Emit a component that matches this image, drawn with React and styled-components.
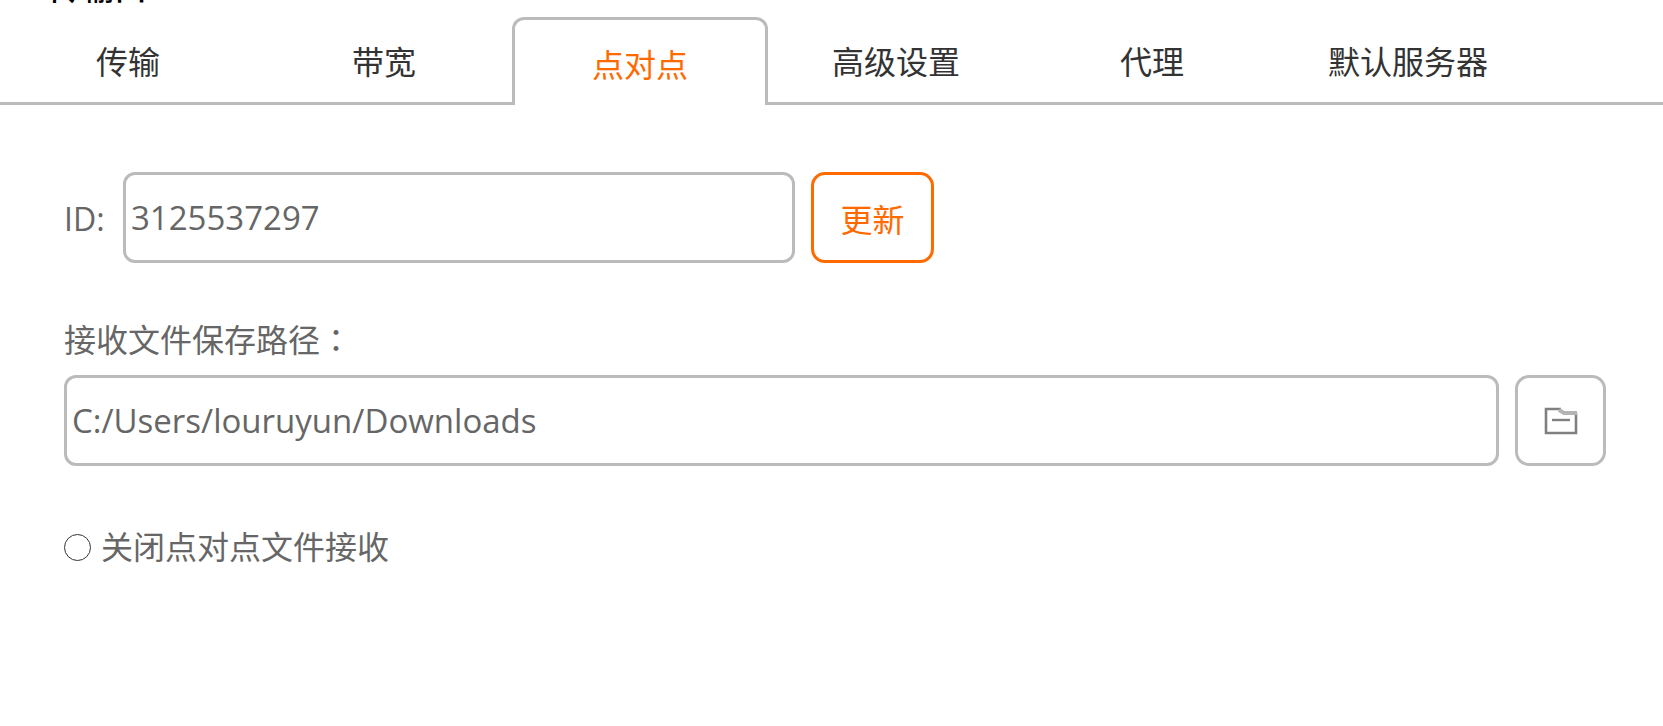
import React, { useState } from 'react';
import styled, { createGlobalStyle } from 'styled-components';

const tabs = ['传输', '带宽', '点对点', '高级设置', '代理', '默认服务器'];

function App() {
  const [activeTab, setActiveTab] = useState('点对点');
  const [id, setId] = useState('3125537297');
  const [path, setPath] = useState('C:/Users/louruyun/Downloads');

  return (
    <Page>
      <GlobalStyle />
      <Title>传输口</Title>
      <TabBar role="tablist">
        {tabs.map((tab) => (
          <Tab
            key={tab}
            role="tab"
            aria-selected={tab === activeTab}
            $active={tab === activeTab}
            onClick={() => setActiveTab(tab)}
          >
            {tab}
          </Tab>
        ))}
        <TabFiller />
      </TabBar>
      <Panel>
        <Row>
          <IdLabel htmlFor="peer-id">ID:</IdLabel>
          <IdInput id="peer-id" value={id} onChange={(e) => setId(e.target.value)} />
          <UpdateButton type="button">更新</UpdateButton>
        </Row>
        <PathField>
          <Label htmlFor="save-path">
            接收文件保存路径<Colon>：</Colon>
          </Label>
          <Row>
            <PathInput id="save-path" value={path} onChange={(e) => setPath(e.target.value)} />
            <BrowseButton type="button" aria-label="浏览">
              <FolderIcon />
            </BrowseButton>
          </Row>
        </PathField>
        <RadioRow>
          <Radio id="close-receive" type="radio" name="close-receive" />
          <Label htmlFor="close-receive">关闭点对点文件接收</Label>
        </RadioRow>
      </Panel>
    </Page>
  );
}

function FolderIcon() {
  return (
    <svg width="34" height="28" viewBox="0 0 34 28" fill="none">
      <path d="M17 2H2V26H32V6" stroke="#808080" strokeWidth="2.6" />
      <path d="M15 3L20 6H33" stroke="#b4b4b4" strokeWidth="4" />
      <path d="M8 13H26" stroke="#808080" strokeWidth="2.4" />
    </svg>
  );
}

const GlobalStyle = createGlobalStyle`
  * {
    box-sizing: border-box;
  }

  body {
    margin: 0;
    background: #fff;
    color: #666;
    font-family: 'Open Sans', 'Noto Sans CJK SC', sans-serif;
    font-size: 32px;
  }

  button,
  input {
    font: inherit;
    color: inherit;
  }
`;

const Page = styled.div`
  overflow: hidden;
`;

// Only the lower edge of the heading shows above the tabs
const Title = styled.div`
  display: flex;
  align-items: flex-end;
  height: 3px;
  margin-bottom: 14px;
  padding-left: 48px;
  overflow: hidden;
  color: #000;
  font-size: 33px;
  font-weight: 500;
  line-height: 30px;
`;

const TabBar = styled.div`
  display: flex;
`;

const Tab = styled.button`
  flex: 0 0 256px;
  height: 88px;
  padding: 0;
  background: #fff;
  border: 3px solid ${({ $active }) => ($active ? '#bbb' : 'transparent')};
  border-bottom-color: ${({ $active }) => ($active ? 'transparent' : '#bbb')};
  border-width: ${({ $active }) => ($active ? '3px 3px 0' : '0 0 3px')};
  border-radius: ${({ $active }) => ($active ? '12px 12px 0 0' : '0')};
  color: ${({ $active }) => ($active ? '#ff6a00' : '#333')};
  cursor: pointer;
`;

const TabFiller = styled.div`
  flex: 1;
  border-bottom: 3px solid #bbb;
`;

const Panel = styled.div`
  padding: 67px 57px 0 64px;
`;

const Row = styled.div`
  display: flex;
  align-items: center;
  gap: 16px;
`;

const PathField = styled.div`
  display: flex;
  flex-direction: column;
  gap: 11px;
  margin-top: 51px;
`;

const Label = styled.label`
  line-height: 48px;
`;

const IdLabel = styled(Label)`
  width: 43px;
  padding-top: 3px;
`;

// The Japanese face centres the full-width colon in its cell
const Colon = styled.span`
  font-family: 'Noto Sans CJK JP', sans-serif;
`;

const TextInput = styled.input`
  height: 91px;
  padding: 0 5px;
  background: #fff;
  border: 3px solid #bbb;
  border-radius: 12px;
  font-size: 33px;
  outline: none;
`;

const IdInput = styled(TextInput)`
  width: 672px;
`;

const PathInput = styled(TextInput)`
  flex: 1;
  min-width: 0;
`;

const Button = styled.button`
  display: flex;
  align-items: center;
  justify-content: center;
  height: 91px;
  padding: 0;
  background: #fff;
  border: 3px solid #bbb;
  border-radius: 14px;
  cursor: pointer;
`;

const UpdateButton = styled(Button)`
  width: 123px;
  border-color: #ff6a00;
  color: #ff6a00;
`;

const BrowseButton = styled(Button)`
  width: 91px;
`;

const RadioRow = styled.div`
  display: flex;
  align-items: center;
  gap: 10px;
  margin-top: 57px;
`;

const Radio = styled.input`
  appearance: none;
  width: 27px;
  height: 27px;
  margin: 0;
  border: 1px solid #333;
  border-radius: 50%;

  &:checked {
    background: #ff6a00;
    box-shadow: inset 0 0 0 5px #fff;
  }
`;

export default App;
